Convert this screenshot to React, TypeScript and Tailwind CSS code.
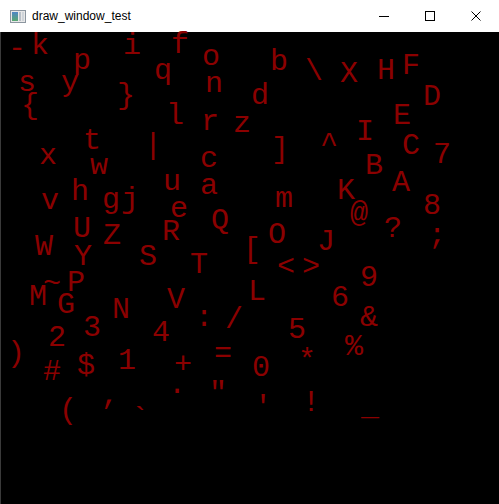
import React from 'react';

// [char, visual centre x, baseline y] in window coordinates
const glyphs: [string, number, number][] = [
  ['-', 17, 57], ['k', 40, 54], ['i', 132, 54], ['f', 180, 53], ['o', 211, 65],
  ['p', 82, 69], ['q', 163, 79], ['s', 27, 91], ['y', 70, 91], ['n', 214, 92],
  ['{', 30, 114], ['}', 126, 104], ['l', 175, 124], ['r', 210, 130], ['z', 242, 132],
  ['t', 92, 149], ['|', 153, 154], ['x', 48, 164], ['w', 99, 174], ['c', 209, 167],
  ['u', 172, 190], ['a', 209, 194], ['h', 80, 200], ['v', 50, 209], ['g', 111, 208],
  ['j', 130, 208], ['e', 179, 217], ['Q', 220, 229], ['U', 82, 237], ['Z', 112, 244],
  ['R', 171, 240], ['W', 44, 255], ['Y', 83, 265], ['S', 148, 265], ['T', 199, 273],
  ['[', 252, 258],
  ['b', 279, 70], ['\\', 314, 80], ['X', 349, 82], ['H', 386, 79], ['F', 411, 74],
  ['d', 260, 104], ['D', 432, 105], ['E', 402, 124], ['I', 365, 140], ['^', 329, 152],
  [']', 280, 158], ['C', 411, 154], ['7', 442, 163], ['B', 374, 174], ['A', 401, 191],
  ['K', 346, 199], ['m', 284, 207], ['8', 432, 214], ['@', 359, 222], ['?', 393, 237],
  [';', 437, 244], ['O', 277, 243], ['J', 326, 250], ['<', 286, 275], ['>', 311, 275],
  ['9', 369, 286], ['L', 257, 300], ['6', 340, 306], ['&', 369, 326], ['5', 297, 338],
  ['%', 354, 355], ['0', 261, 376], ['*', 307, 369], ["'", 263, 416], ['!', 311, 411],
  ['_', 370, 415],
  ['~', 52, 292], ['P', 76, 291], ['M', 38, 305], ['G', 66, 313], ['N', 121, 318],
  ['V', 176, 308], ['3', 92, 336], ['2', 57, 346], ['4', 161, 341], [':', 204, 326],
  ['/', 234, 328], [')', 16, 362], ['=', 223, 362], ['#', 52, 380], ['$', 86, 374],
  ['1', 127, 369], ['+', 183, 373], ['.', 177, 393], ['"', 218, 402], ['(', 68, 419],
  [',', 110, 404], ['`', 140, 427],
];

const TITLE_H = 32;
const HALF_ADVANCE = 9; // 30px mono -> 18px cell
const BASELINE = 23; // baseline offset inside a leading-none 30px box

function AppIcon() {
  return (
    <svg width="16" height="13" viewBox="0 0 16 13">
      <defs>
        <linearGradient id="pane" x1="0" y1="0" x2="0" y2="1">
          <stop offset="0" stopColor="#4f86c6" />
          <stop offset="1" stopColor="#58a870" />
        </linearGradient>
      </defs>
      <rect x="0.5" y="0.5" width="15" height="12" fill="#e8e8e8" stroke="#8c96a0" />
      <rect x="2" y="2" width="6" height="9" fill="url(#pane)" />
      <rect x="9" y="2" width="2" height="9" fill="#b9c0c8" />
      <rect x="12" y="2" width="2" height="9" fill="#cfd4d9" />
    </svg>
  );
}

function TitleBar() {
  return (
    <div className="h-[32px] shrink-0 bg-white flex items-center">
      <div className="pl-[10px] pr-[6px] flex items-center">
        <AppIcon />
      </div>
      <span className="flex-1 text-[12px] text-black font-['Liberation_Sans',sans-serif] leading-none pb-[1px]">
        draw_window_test
      </span>
      <div className="flex h-full">
        <div className="w-[46px] flex items-center justify-center">
          <div className="w-[10px] h-px bg-black" />
        </div>
        <div className="w-[46px] flex items-center justify-center">
          <div className="w-[10px] h-[10px] border border-black" />
        </div>
        <div className="w-[46px] flex items-center justify-center">
          <svg width="10" height="10" viewBox="0 0 10 10">
            <path d="M0.5 0.5 L9.5 9.5 M9.5 0.5 L0.5 9.5" stroke="#000" strokeWidth="1" />
          </svg>
        </div>
      </div>
    </div>
  );
}

export default function App() {
  return (
    <div className="w-[499px] h-[504px] flex flex-col bg-black overflow-hidden">
      <TitleBar />
      <div className="relative flex-1 bg-black border-l border-[#3a3a3a]">
        {glyphs.map(([ch, cx, by], i) => (
          <span
            key={i}
            className="absolute w-[18px] text-center text-[30px] leading-none text-[#8b0000] font-['Liberation_Mono',monospace] whitespace-pre"
            style={{ left: cx - HALF_ADVANCE - 1, top: by - TITLE_H - BASELINE }}
          >
            {ch}
          </span>
        ))}
      </div>
    </div>
  );
}
